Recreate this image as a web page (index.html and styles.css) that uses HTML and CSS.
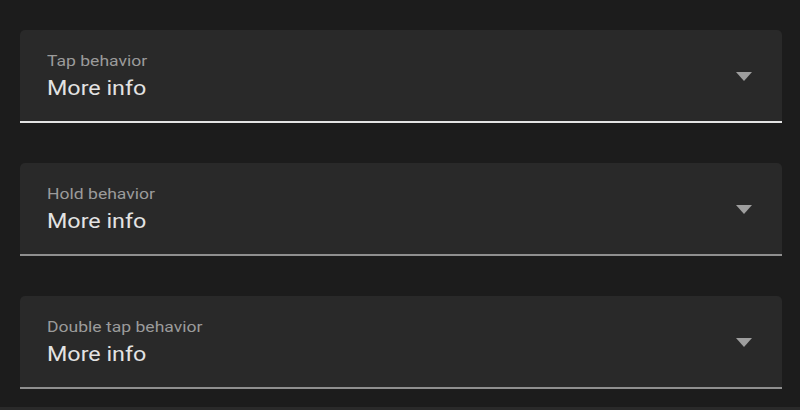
FILE: index.html
```html
<!DOCTYPE html>
<html>
<head>
<meta charset="utf-8">
<link rel="stylesheet" href="styles.css">
</head>
<body>
<div class="page">
  <div class="fields">
    <div class="field focused">
      <div class="text">
        <div class="label">Tap behavior</div>
        <div class="value">More info</div>
      </div>
      <span class="arrow"></span>
    </div>
    <div class="field">
      <div class="text">
        <div class="label">Hold behavior</div>
        <div class="value">More info</div>
      </div>
      <span class="arrow"></span>
    </div>
    <div class="field">
      <div class="text">
        <div class="label">Double tap behavior</div>
        <div class="value">More info</div>
      </div>
      <span class="arrow"></span>
    </div>
  </div>
  <div class="bottom-bar"></div>
</div>
</body>
</html>
```
FILE: styles.css
```css
html, body {
  margin: 0;
  padding: 0;
  background: #1c1c1c;
  font-family: Roboto, "Liberation Sans", sans-serif;
}
.page {
  width: 800px;
  height: 410px;
  display: flex;
  flex-direction: column;
  overflow: hidden;
}
.fields {
  flex: 1;
  display: flex;
  flex-direction: column;
  gap: 40px;
  padding: 30px 18px 0 20px;
}
.field {
  height: 93px;
  box-sizing: border-box;
  background: #292929;
  border-radius: 5px 5px 0 0;
  border-bottom: 2px solid #8f8f8f;
  display: flex;
  align-items: flex-start;
  padding: 22px 30px 0 27px;
}
.field.focused {
  border-bottom-color: #e3e3e3;
}
.text {
  flex: 1;
  display: flex;
  flex-direction: column;
  align-items: flex-start;
}
.label {
  font-size: 15px;
  line-height: 18px;
  color: #9b9b9b;
  transform: scaleX(1.17);
  transform-origin: left center;
}
.value {
  font-size: 20px;
  line-height: 26px;
  color: #e3e3e3;
  margin-top: 5px;
  transform: scaleX(1.165);
  transform-origin: left center;
}
.arrow {
  align-self: center;
  width: 0;
  height: 0;
  border-left: 8.5px solid transparent;
  border-right: 8.5px solid transparent;
  border-top: 9px solid #9e9e9e;
  margin-top: -21px;
}
.bottom-bar {
  height: 3px;
  background: #2a2a2a;
}
```
